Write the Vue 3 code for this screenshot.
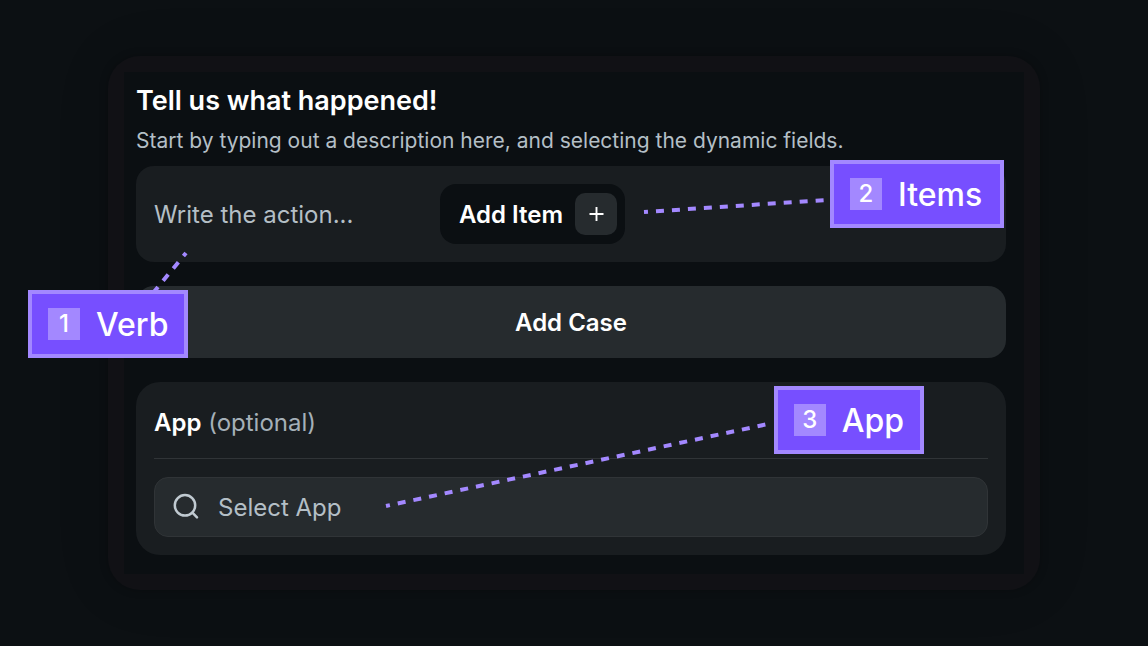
<script setup>
import { ref } from 'vue'

const action = ref('')
const app = ref('')
</script>

<template>
  <main class="stage">
    <section class="panel">
      <header class="intro">
        <h1>Tell us what happened!</h1>
        <p>Start by typing out a description here, and selecting the dynamic fields.</p>
      </header>

      <form class="form" @submit.prevent>
        <div class="action-row">
          <input v-model="action" class="action-input" type="text" aria-label="Action" placeholder="Write the action..." />
          <button class="add-item" type="button">
            <span>Add Item</span>
            <span class="plus">
              <svg width="16" height="16" viewBox="0 0 16 16" aria-hidden="true">
                <path d="M8.5 1v14M1.5 8h14" />
              </svg>
            </span>
          </button>
        </div>

        <button class="add-case" type="button">Add Case</button>

        <div class="app-box">
          <label class="app-label" for="app-field"><strong>App</strong> (optional)</label>
          <div class="search">
            <svg width="28" height="28" viewBox="0 0 28 28" aria-hidden="true">
              <circle cx="13" cy="12.3" r="10.2" />
              <path d="M20.4 19.7L25 24.4" />
            </svg>
            <input id="app-field" v-model="app" type="text" placeholder="Select App" />
          </div>
        </div>
      </form>

      <div class="callout verb">
        <svg class="link" width="40" height="44" viewBox="0 0 40 44" aria-hidden="true">
          <path d="M36 3L3 43" />
        </svg>
        <span class="num">1</span><span class="name">Verb</span>
      </div>
      <div class="callout items">
        <svg class="link" width="190" height="20" viewBox="0 0 190 20" aria-hidden="true">
          <path d="M4 16L186 4" />
        </svg>
        <span class="num">2</span><span class="name">Items</span>
      </div>
      <div class="callout app">
        <svg class="link" width="392" height="92" viewBox="0 0 392 92" aria-hidden="true">
          <path d="M4 88L386 6" />
        </svg>
        <span class="num">3</span><span class="name">App</span>
      </div>
    </section>
  </main>
</template>

<style>
body {
  margin: 0;
  background: #0c1013;
}
</style>

<style scoped>
.stage {
  box-sizing: border-box;
  min-height: 100vh;
  padding: 56px 108px;
  background: #0c1013;
  color: #fff;
  font-family: Inter, "Liberation Sans", sans-serif;
}
.panel {
  position: relative;
  box-sizing: border-box;
  padding: 28px 34px 35px 28px;
  border-radius: 32px;
  background: linear-gradient(#0b0f12, #0b0f12) 16px 16px / calc(100% - 32px) calc(100% - 32px) no-repeat #111115;
  box-shadow: 0 0 8px rgba(0, 0, 0, 0.25), 0 0 60px rgba(0, 0, 0, 0.08);
}
.intro {
  display: flex;
  flex-direction: column;
  gap: 9px;
  margin-bottom: 11px;
}
h1 {
  margin: 0;
  font-size: 27px;
  line-height: 34px;
  font-weight: 600;
}
p {
  margin: 0;
  font-size: 21px;
  line-height: 28px;
  color: #b4bfc6;
}
.form {
  display: flex;
  flex-direction: column;
  gap: 24px;
}
input {
  min-width: 0;
  padding: 0;
  border: 0;
  outline: 0;
  background: none;
  color: #fff;
  font: inherit;
}
input::placeholder {
  color: #b4bfc6;
  opacity: 1;
}
button {
  border: 0;
  color: #fff;
  font: inherit;
  font-weight: 600;
  cursor: pointer;
}
.action-row,
.search,
.app-label,
.add-case {
  font-size: 24px;
}
.action-row {
  display: flex;
  align-items: center;
  gap: 18px;
  padding: 18px;
  border-radius: 18px;
  background: #191d20;
}
.action-input {
  width: 268px;
}
.add-item {
  display: flex;
  align-items: center;
  gap: 12px;
  height: 60px;
  padding: 0 8px 0 19px;
  border-radius: 16px;
  background: #0b0f12;
}
.plus {
  display: grid;
  place-items: center;
  width: 42px;
  height: 42px;
  border-radius: 10px;
  background: #262b2e;
}
.plus path {
  stroke: #fff;
  stroke-width: 1.9;
}
.add-case {
  height: 72px;
  border-radius: 18px;
  background: #262b2e;
}
.app-box {
  padding: 18px;
  border-radius: 24px;
  background: #191d20;
}
.app-label {
  display: block;
  margin-bottom: 18px;
  padding: 4px 0 17px;
  border-bottom: 1px solid #303437;
  line-height: 37px;
  color: #a5b0b8;
}
.app-label strong {
  font-weight: 600;
  color: #fff;
}
.search {
  display: flex;
  align-items: center;
  gap: 18px;
  height: 58px;
  padding: 0 18px 0 17px;
  border: 1px solid #303437;
  border-radius: 14px;
  background: #262b2e;
}
.search input {
  flex: 1;
}
.search svg {
  flex: none;
  fill: none;
  stroke: #c0cad1;
  stroke-width: 2.5;
  stroke-linecap: round;
}
.callout {
  position: absolute;
  display: flex;
  align-items: center;
  gap: 16px;
  padding: 13px 16px;
  border: 4px solid #a388ff;
  background: #774fff;
  font-size: 32px;
  line-height: 32px;
  font-weight: 500;
}
.num {
  width: 32px;
  background: #a388ff;
  font-size: 24px;
  text-align: center;
}
.name {
  padding-top: 2px;
}
.verb {
  left: -80px;
  top: 234px;
}
.items {
  right: 36px;
  top: 104px;
  min-width: 134px;
}
.app {
  right: 116px;
  top: 330px;
}
.link {
  position: absolute;
  fill: none;
  stroke: #a388ff;
  stroke-width: 4;
  stroke-dasharray: 8 8;
  stroke-dashoffset: 4;
}
.verb .link {
  left: 118px;
  bottom: 60px;
}
.items .link {
  right: 170px;
  top: 32px;
}
.app .link {
  right: 146px;
  top: 28px;
}
</style>
